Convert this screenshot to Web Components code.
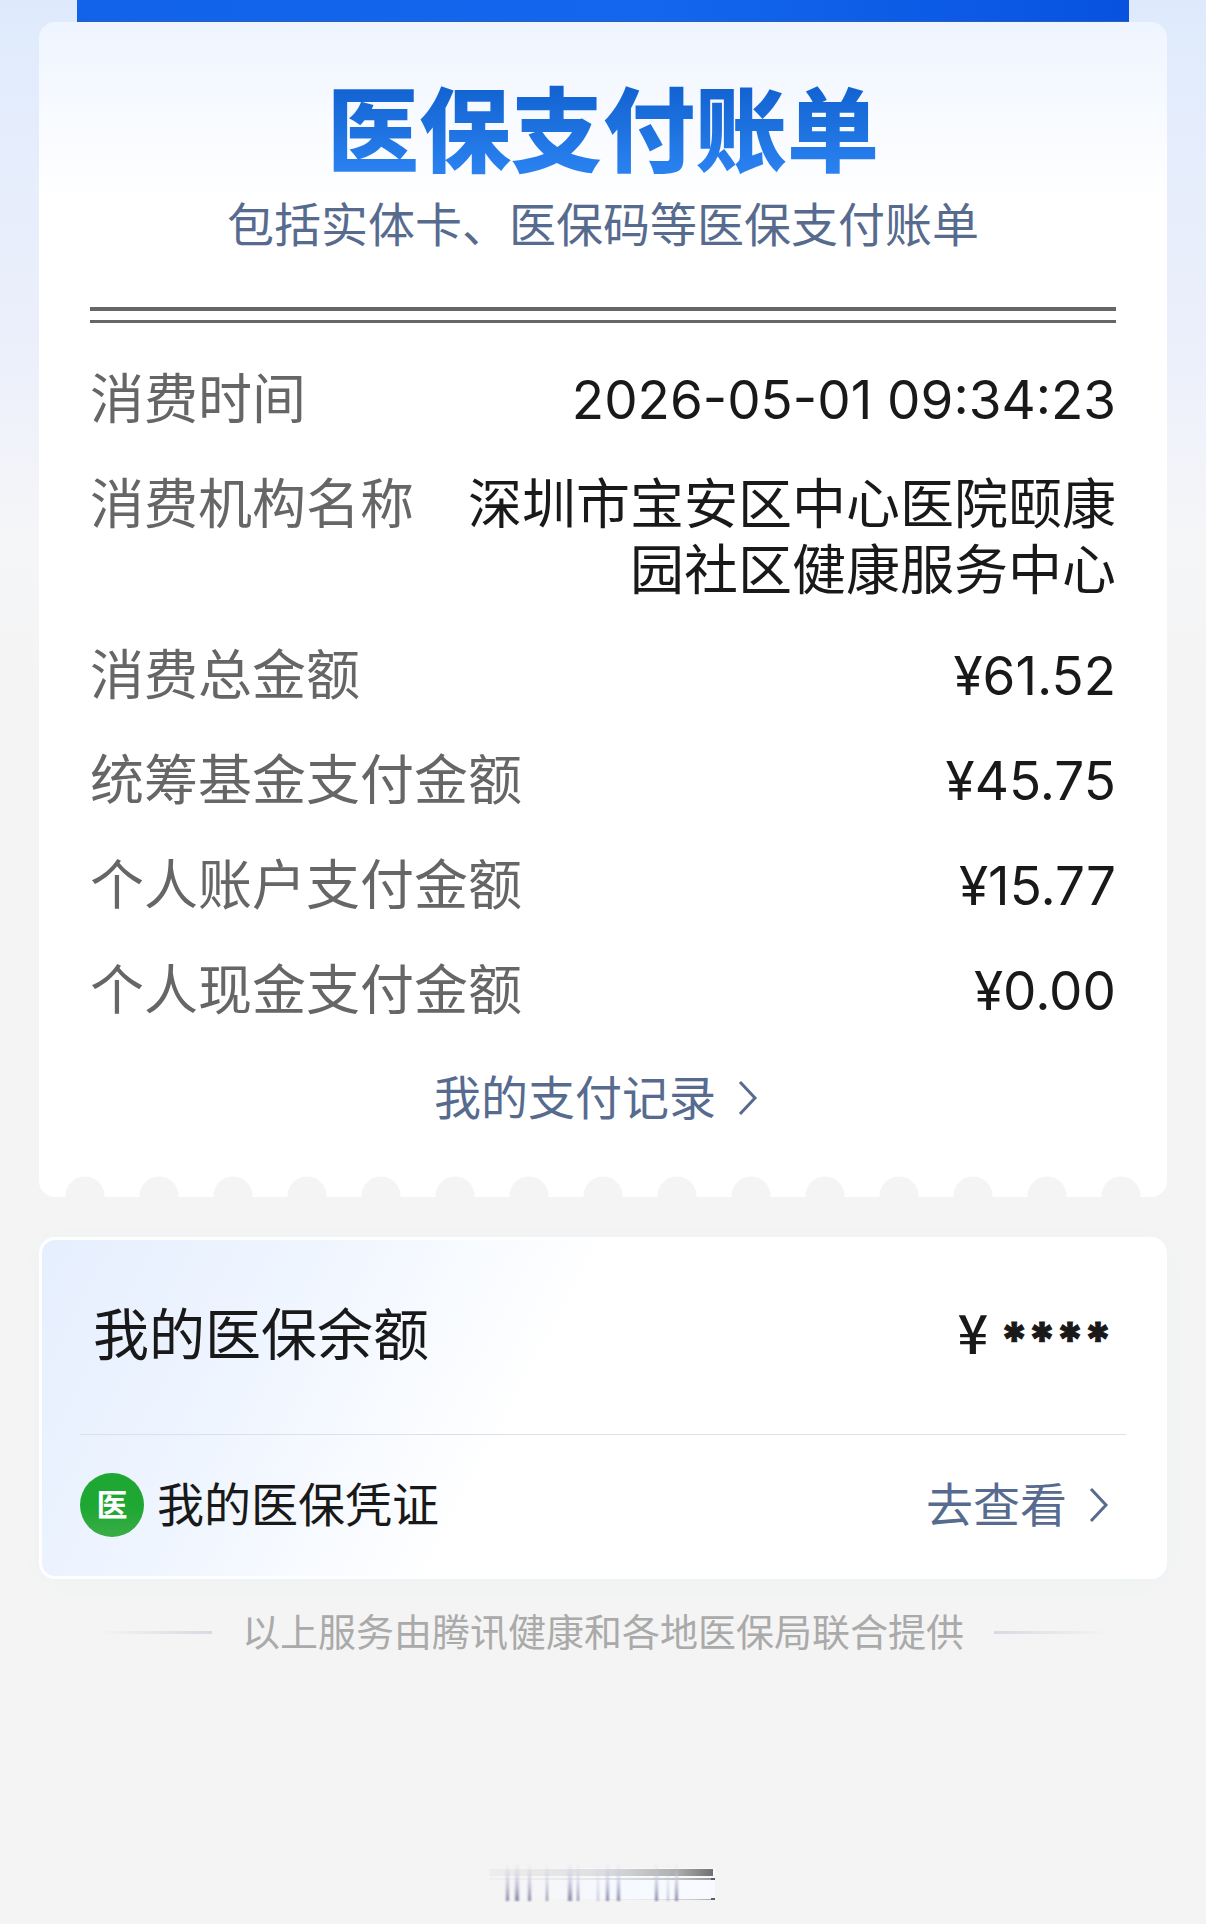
<!DOCTYPE html>
<html lang="zh-CN">
<head>
<meta charset="utf-8">
<meta name="viewport" content="width=device-width, initial-scale=1">
<title>医保支付账单</title>
<style>
	html { background: #f4f4f4; }
	body {
		background: linear-gradient(#deeafc 0, #e5edfc 130px, #ebeffb 330px, #f5f6f8 540px, #f4f4f4 700px);
		color: #191919;
		font-family: Inter, "Noto Sans CJK SC", sans-serif;
		margin: 0;
	}
</style>
</head>
<body>
<bill-page>
	<bill-card heading="医保支付账单" note="包括实体卡、医保码等医保支付账单">
		<bill-row label="消费时间" numeric>2026-05-01 09:34:23</bill-row>
		<bill-row label="消费机构名称">深圳市宝安区中心医院颐康园社区健康服务中心</bill-row>
		<bill-row label="消费总金额" numeric>¥61.52</bill-row>
		<bill-row label="统筹基金支付金额" numeric>¥45.75</bill-row>
		<bill-row label="个人账户支付金额" numeric>¥15.77</bill-row>
		<bill-row label="个人现金支付金额" numeric>¥0.00</bill-row>
		<arrow-link slot="more" href="#records">我的支付记录</arrow-link>
	</bill-card>
	<balance-card>
		<span slot="title">我的医保余额</span>
		<span slot="badge">医</span>
		<span slot="voucher">我的医保凭证</span>
		<arrow-link slot="action" href="#voucher">去查看</arrow-link>
	</balance-card>
	<page-footer>以上服务由腾讯健康和各地医保局联合提供</page-footer>
	<code-strip></code-strip>
</bill-page>

<script>
class BillPage extends HTMLElement {
	constructor() {
		super();

		this.attachShadow({ mode: 'open' });

		this.shadowRoot.innerHTML = `
			<style>
				:host {
					display: flex;
					flex-direction: column;
					padding: 0 39px 20px;
				}
				.banner {
					background: linear-gradient(90deg, #1263ea, #1466ee 55%, #0753e0);
					border-bottom: 1px solid #2a5fb4;
					height: 21px;
					margin: 0 38px;
				}
			</style>
			<div class="banner"></div>
			<slot></slot>
		`;
	}
}

class BillCard extends HTMLElement {
	constructor() {
		super();

		this.attachShadow({ mode: 'open' });

		this.shadowRoot.innerHTML = `
			<style>
				:host {
					background: linear-gradient(#eff5ff, #fff 180px);
					border-radius: 16px;
					display: block;
					padding-top: 58px;
				}
				header {
					text-align: center;
				}
				h1 {
					background: linear-gradient(#1364d2 10%, #2a82f0 90%);
					background-clip: text;
					-webkit-background-clip: text;
					color: transparent;
					font-size: 92px;
					font-weight: 900;
					line-height: 104px;
					margin: 0;
				}
				p {
					color: #576b8f;
					font-size: 47px;
					line-height: 60px;
					margin: 11px 0 0;
				}
				hr {
					border: solid #666;
					border-width: 4px 0 3px;
					height: 9px;
					margin: 52px 51px 44px;
				}
				.rows {
					display: flex;
					flex-direction: column;
					gap: 39px;
					padding: 0 51px;
				}
				.more {
					display: flex;
					justify-content: center;
					margin-top: 44px;
				}
				.teeth {
					background: radial-gradient(circle at 50% 20px, #f4f4f4 19px, transparent 20px) 0 0 / 74px 21px round;
					height: 21px;
					margin: 48px 9px 0;
				}
			</style>
			<header>
				<h1></h1>
				<p></p>
			</header>
			<hr>
			<div class="rows"><slot></slot></div>
			<div class="more"><slot name="more"></slot></div>
			<div class="teeth"></div>
		`;
	}

	connectedCallback() {
		this.shadowRoot.querySelector('h1').textContent = this.getAttribute('heading');
		this.shadowRoot.querySelector('p').textContent = this.getAttribute('note');
	}
}

class BillRow extends HTMLElement {
	constructor() {
		super();

		this.attachShadow({ mode: 'open' });

		this.shadowRoot.innerHTML = `
			<style>
				:host {
					display: flex;
					font-size: 54px;
					gap: 48px;
					justify-content: space-between;
					line-height: 66px;
				}
				.label {
					color: #666;
					flex: none;
				}
				.value {
					text-align: right;
				}
				:host([numeric]) .value { font-size: 53px; }
			</style>
			<span class="label"></span>
			<span class="value"><slot></slot></span>
		`;
	}

	connectedCallback() {
		this.shadowRoot.querySelector('.label').textContent = this.getAttribute('label');
	}
}

class ArrowLink extends HTMLElement {
	constructor() {
		super();

		this.attachShadow({ mode: 'open' });

		this.shadowRoot.innerHTML = `
			<style>
				:host { display: block; }
				a {
					align-items: center;
					color: #576b8f;
					display: flex;
					font-size: 47px;
					gap: 16px;
					line-height: 60px;
					text-decoration: none;
				}
				svg {
					fill: none;
					height: 40px;
					stroke: currentColor;
					stroke-width: 3;
					width: 40px;
				}
			</style>
			<a>
				<slot></slot>
				<svg viewBox="0 0 40 40" aria-hidden="true"><path d="M8 4 23 20 8 36" /></svg>
			</a>
		`;
	}

	connectedCallback() {
		this.shadowRoot.querySelector('a').href = this.getAttribute('href');
	}
}

class BalanceCard extends HTMLElement {
	constructor() {
		super();

		this.attachShadow({ mode: 'open' });

		this.shadowRoot.innerHTML = `
			<style>
				:host {
					background: linear-gradient(118deg, #e6effe 0, #edf4ff 18%, #fff 44%);
					border: 3px solid #fff;
					border-radius: 16px;
					box-shadow: 0 4px 20px #e6f0f466;
					display: block;
					margin-top: 40px;
					padding: 0 38px;
				}
				.row {
					align-items: center;
					display: flex;
					justify-content: space-between;
				}
				.balance {
					align-items: flex-start;
					border-bottom: 1px solid #dce1e8;
					font-size: 56px;
					line-height: 72px;
					padding: 59px 14px 63px 13px;
				}
				.amount {
					align-items: center;
					display: flex;
					gap: 12px;
					line-height: 64px;
				}
				.currency {
					font-family: "Noto Sans CJK SC", sans-serif;
					font-size: 54px;
					font-weight: 500;
				}
				.mask {
					font-size: 48px;
					font-weight: 800;
					line-height: 46px;
					padding-top: 18px;
					-webkit-text-stroke: 1px;
				}
				.voucher {
					font-size: 47px;
					line-height: 60px;
					padding: 38px 3px 39px 0;
				}
				.name {
					align-items: center;
					display: flex;
					gap: 13px;
				}
				.badge {
					background: linear-gradient(#1fa733 55%, #3aad48);
					border-radius: 50%;
					color: #fff;
					font-size: 31px;
					font-weight: 700;
					height: 64px;
					line-height: 64px;
					text-align: center;
					width: 64px;
				}
			</style>
			<div class="row balance">
				<slot name="title"></slot>
				<span class="amount"><span class="currency">¥</span><span class="mask">****</span></span>
			</div>
			<div class="row voucher">
				<span class="name"><span class="badge"><slot name="badge"></slot></span><slot name="voucher"></slot></span>
				<slot name="action"></slot>
			</div>
		`;
	}
}

class PageFooter extends HTMLElement {
	constructor() {
		super();

		this.attachShadow({ mode: 'open' });

		this.shadowRoot.innerHTML = `
			<style>
				:host {
					align-items: center;
					color: #aaa;
					display: flex;
					font-size: 38px;
					gap: 30px;
					justify-content: center;
					line-height: 48px;
					margin-top: 29px;
				}
				i {
					background: linear-gradient(90deg, #dde1e500, #d6dbe2);
					height: 3px;
					width: 116px;
				}
				i:last-child {
					background: linear-gradient(90deg, #d6dbe2, #dde1e500);
				}
			</style>
			<i></i>
			<slot></slot>
			<i></i>
		`;
	}
}

class CodeStrip extends HTMLElement {
	constructor() {
		super();

		this.attachShadow({ mode: 'open' });

		this.shadowRoot.innerHTML = `
			<style>
				:host {
					display: flex;
					justify-content: center;
					margin-top: 208px;
				}
				svg {
					height: 38px;
					width: 228px;
				}
				.bars { filter: blur(1px); }
			</style>
			<svg viewBox="0 0 228 38" aria-hidden="true">
				<defs>
					<linearGradient id="bar">
						<stop offset="0" stop-color="#ddd" stop-opacity="0.300" />
						<stop offset="0.500" stop-color="#ccc" stop-opacity="0.600" />
						<stop offset="0.850" stop-color="#aaa" />
						<stop offset="1" stop-color="#707070" />
					</linearGradient>
					<linearGradient id="glow">
						<stop offset="0" stop-color="#fafaff" stop-opacity="0" />
						<stop offset="0.600" stop-color="#f6f9ff" />
						<stop offset="1" stop-color="#f8faff" />
					</linearGradient>
					<linearGradient id="line" x2="0" y2="1">
						<stop offset="0" stop-color="#c8c8dc" stop-opacity="0" />
						<stop offset="0.500" stop-color="#c4c4da" stop-opacity="0.800" />
						<stop offset="1" stop-color="#8484a4" />
					</linearGradient>
				</defs>
				<rect y="4" width="226" height="31" fill="url(#glow)" />
				<rect y="5" width="224" height="7" fill="url(#bar)" />
				<rect y="14" width="224" height="2" fill="url(#bar)" opacity="0.700" />
				<rect y="35" x="110" width="114" height="1" fill="url(#bar)" opacity="0.600" />
				<g class="bars" fill="url(#line)">
					<rect x="17" width="3" height="37" />
					<rect x="26" width="4" height="37" />
					<rect x="39" width="3" height="37" />
					<rect x="57" width="2" height="37" />
					<rect x="79" width="4" height="37" />
					<rect x="88" width="2" height="37" />
					<rect x="108" width="2" height="37" opacity="0.500" />
					<rect x="117" width="3" height="37" />
					<rect x="128" width="3" height="37" />
					<rect x="166" width="3" height="37" />
					<rect x="178" width="2" height="37" opacity="0.500" />
					<rect x="186" width="3" height="37" />
				</g>
				<path d="M222 15h4M222 35h4" stroke="#5c5c6c" stroke-width="2" />
			</svg>
		`;
	}
}

customElements.define('bill-page', BillPage);
customElements.define('bill-card', BillCard);
customElements.define('bill-row', BillRow);
customElements.define('arrow-link', ArrowLink);
customElements.define('balance-card', BalanceCard);
customElements.define('page-footer', PageFooter);
customElements.define('code-strip', CodeStrip);
</script>
</body>
</html>
